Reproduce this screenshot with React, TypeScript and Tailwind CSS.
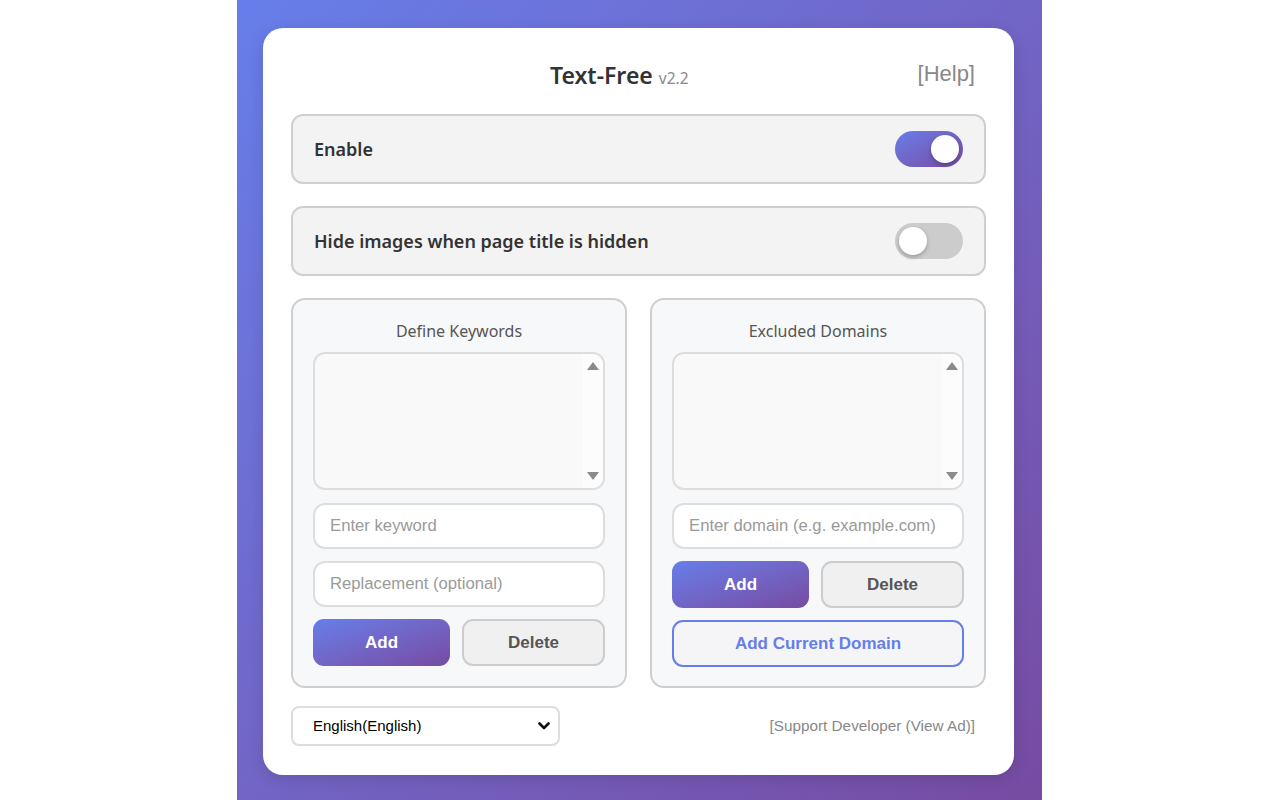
import { useState } from 'react';

const sans = "font-['Noto_Sans','Open_Sans',sans-serif]";
const arial = "font-['Liberation_Sans',Arial,sans-serif]";

function Toggle({ on, onChange }: { on: boolean; onChange: () => void }) {
    return (
        <button
            onClick={onChange}
            className={`w-[68px] h-[36px] rounded-full flex items-center px-[4px] ${on ? 'bg-linear-to-br from-[#667eea] to-[#764ba2] justify-end' : 'bg-[#cccccc] justify-start'}`}
        >
            <span className="w-[28px] h-[28px] rounded-full bg-white shadow-[0_2px_4px_rgba(0,0,0,0.25)]" />
        </button>
    );
}

function ListBox() {
    return (
        <div className="h-[138px] rounded-[12px] border-2 border-[#dddddd] bg-[#f9f9f9] flex overflow-hidden">
            <div className="flex-1" />
            <div className="w-[20px] bg-[#fcfcfc] flex flex-col items-center justify-between py-[8px]">
                <svg width="12" height="8" viewBox="0 0 12 8"><path d="M6 0 L12 8 L0 8 Z" fill="#8a8a8a" /></svg>
                <svg width="12" height="8" viewBox="0 0 12 8"><path d="M0 0 L12 0 L6 8 Z" fill="#8a8a8a" /></svg>
            </div>
        </div>
    );
}

function TextInput({ placeholder }: { placeholder: string }) {
    return (
        <input
            placeholder={placeholder}
            className={`${arial} w-full h-[46px] rounded-[12px] border-2 border-[#dddddd] bg-white px-[15px] text-[16.7px] text-[#333] placeholder:text-[#9a9a9a] outline-none`}
        />
    );
}

function ButtonRow() {
    return (
        <div className={`${arial} flex gap-[12px]`}>
            <button className="w-[137px] h-[47px] rounded-[11px] bg-linear-to-br from-[#667eea] to-[#764ba2] text-white font-bold text-[17px]">
                Add
            </button>
            <button className="flex-1 h-[47px] rounded-[11px] border-2 border-[#cccccc] bg-[#f0f0f0] text-[#555] font-bold text-[17px]">
                Delete
            </button>
        </div>
    );
}

export default function App() {
    const [enabled, setEnabled] = useState(true);
    const [hideImages, setHideImages] = useState(false);

    return (
        <div className="min-h-screen bg-white flex">
            <div className="ml-[237px] w-[805px] h-[800px] bg-linear-to-br from-[#667eea] to-[#764ba2] pt-[28px] pl-[26px]">
                <div className="w-[751px] h-[747px] bg-white rounded-[20px] shadow-[0_4px_16px_rgba(0,0,0,0.12)] px-[28px] pt-[28px]">
                    {/* header */}
                    <div className="h-[38px] flex items-center mb-[20px]">
                        <div className={`${sans} flex-1 text-center pl-[30px] text-[#333]`}>
                            <span className="text-[23px] font-semibold">Text-Free</span>
                            <span className="text-[15.5px] text-[#888] ml-[6px]">v2.2</span>
                        </div>
                        <a className={`${arial} text-[22px] text-[#888] mr-[11px] mb-[4px] cursor-pointer`}>[Help]</a>
                    </div>

                    {/* switches */}
                    <div className="h-[70px] rounded-[12px] border-2 border-[#cfcfcf] bg-[#f3f3f3] flex items-center justify-between px-[21px] mb-[22px]">
                        <span className={`${sans} text-[18px] font-semibold text-[#333]`}>Enable</span>
                        <Toggle on={enabled} onChange={() => setEnabled(!enabled)} />
                    </div>
                    <div className="h-[70px] rounded-[12px] border-2 border-[#cfcfcf] bg-[#f3f3f3] flex items-center justify-between px-[21px] mb-[22px]">
                        <span className={`${sans} text-[18px] font-semibold text-[#333]`}>Hide images when page title is hidden</span>
                        <Toggle on={hideImages} onChange={() => setHideImages(!hideImages)} />
                    </div>

                    {/* panels */}
                    <div className="flex gap-[23px] mb-[18px]">
                        <div className="w-[336px] h-[390px] rounded-[14px] border-2 border-[#cfcfcf] bg-[#f7f8f9] px-[20px] pt-[20px]">
                            <div className={`${sans} h-[22px] leading-[22px] text-center text-[16px] text-[#555] mb-[10px]`}>Define Keywords</div>
                            <ListBox />
                            <div className="mt-[13px] flex flex-col gap-[12px]">
                                <TextInput placeholder="Enter keyword" />
                                <TextInput placeholder="Replacement (optional)" />
                                <ButtonRow />
                            </div>
                        </div>
                        <div className="w-[336px] h-[390px] rounded-[14px] border-2 border-[#cfcfcf] bg-[#f7f8f9] px-[20px] pt-[20px]">
                            <div className={`${sans} h-[22px] leading-[22px] text-center text-[16px] text-[#555] mb-[10px]`}>Excluded Domains</div>
                            <ListBox />
                            <div className="mt-[13px] flex flex-col gap-[12px]">
                                <TextInput placeholder="Enter domain (e.g. example.com)" />
                                <ButtonRow />
                                <button className={`${arial} h-[47px] rounded-[11px] border-2 border-[#667eea] bg-[#f5f5f7] text-[#667eea] font-bold text-[17px]`}>
                                    Add Current Domain
                                </button>
                            </div>
                        </div>
                    </div>

                    {/* footer */}
                    <div className="flex items-center justify-between">
                        <div className={`${arial} w-[269px] h-[40px] rounded-[8px] border-2 border-[#dddddd] bg-white flex items-center pl-[20px] pr-[8px]`}>
                            <select className="flex-1 appearance-none bg-transparent outline-none text-[15px] text-black">
                                <option>English(English)</option>
                            </select>
                            <svg width="12" height="8" viewBox="0 0 12 8">
                                <path d="M1.5 1.5 L6 6 L10.5 1.5" fill="none" stroke="#111" strokeWidth="2.6" strokeLinecap="round" strokeLinejoin="round" />
                            </svg>
                        </div>
                        <a className={`${arial} text-[15.3px] text-[#888] mr-[11px] cursor-pointer`}>[Support Developer (View Ad)]</a>
                    </div>
                </div>
            </div>
        </div>
    );
}
